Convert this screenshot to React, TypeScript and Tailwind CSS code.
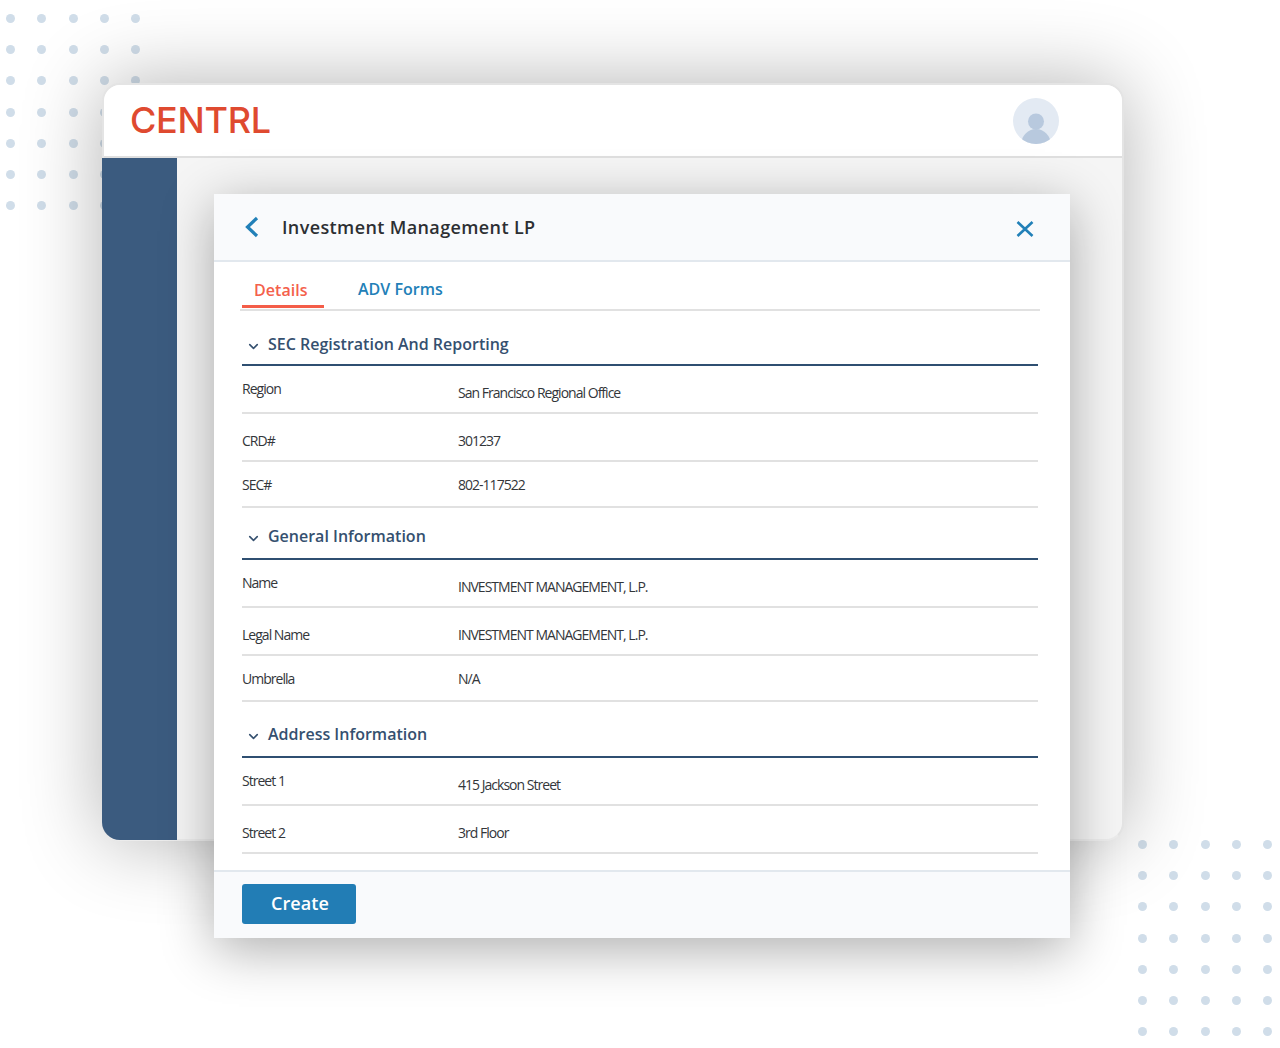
import React from "react";
import { ChevronDown } from "lucide-react";

const dotIndexes = Array.from({ length: 35 }, (_, i) => i);

const DotGrid = ({ className }: { className: string }) => (
  <div className={`absolute grid grid-cols-[repeat(5,9px)] gap-x-[22.25px] gap-y-[22.2px] ${className}`}>
    {dotIndexes.map((i) => (
      <div key={i} className="h-[9px] w-[9px] rounded-full bg-[#d0dde9]" />
    ))}
  </div>
);

interface RowProps {
  label: string;
  value: string;
  height: string;
  labelPad: string;
  valuePad: string;
}

const Row = ({ label, value, height, labelPad, valuePad }: RowProps) => (
  <div className={`mx-[2px] flex items-start border-b-2 border-[#e1e1e1] text-sm leading-5 tracking-[-0.98px] text-[#33363a] ${height}`}>
    <div className={`w-[216px] ${labelPad}`}>{label}</div>
    <div className={valuePad}>{value}</div>
  </div>
);

const SectionHeading = ({ title, className }: { title: string; className: string }) => (
  <div className={`mx-[2px] flex items-end border-b-2 border-[#2f4f71] text-[#35506f] ${className}`}>
    <ChevronDown size={15} strokeWidth={2.5} className="ml-[4px] mb-[2px] mr-[7px]" />
    <span className="text-base font-semibold leading-6">{title}</span>
  </div>
);

const App = () => {
  return (
    <div className="relative h-[1048px] w-[1280px] overflow-hidden bg-white font-['Open_Sans',sans-serif]">
      <DotGrid className="left-[6px] top-[14px]" />
      <DotGrid className="left-[1138px] top-[840px]" />

      <div className="relative ml-[102px] mt-[83px] h-[758px] w-[1022px] rounded-[18px] border-2 border-[#e4e4e4] border-b-[#ececec] bg-[#f5f5f5] shadow-[0_0_80px_rgba(0,0,0,0.3)]">
        {/* top bar */}
        <div className="flex h-[73px] items-center justify-between rounded-t-[16px] border-b-2 border-[#dfdfdf] bg-white pl-[26px] pr-[63px]">
          <span className="pb-[2px] font-['Inter',sans-serif] text-[36px] font-[450] leading-none tracking-[-0.3px] text-[#df4a30]">CENTRL</span>
          <svg width="46" height="46" viewBox="0 0 46 46">
            <defs>
              <clipPath id="avatarClip">
                <circle cx="23" cy="23" r="23" />
              </clipPath>
            </defs>
            <circle cx="23" cy="23" r="23" fill="#e3eaf3" />
            <g clipPath="url(#avatarClip)" fill="#b8c9de">
              <circle cx="23" cy="23.5" r="8" />
              <ellipse cx="23" cy="47" rx="15" ry="16" />
            </g>
          </svg>
        </div>

        <div className="flex h-[682px]">
          <div className="-ml-[2px] w-[75px] rounded-bl-[18px] bg-[#3b5b7f]" />

          {/* dialog */}
          <div className="ml-[37px] mt-[36px] h-[744px] w-[856px] bg-white shadow-[0_12px_50px_rgba(0,0,0,0.32)]">
            <div className="flex h-[68px] items-center justify-between border-b-2 border-[#e2e8ee] bg-[#f9fafc] pl-[30px] pr-[36px]">
              <div className="flex items-center">
                <svg width="15" height="22" viewBox="0 0 15 22" fill="none" stroke="#2280b8" strokeWidth="3.2">
                  <path d="M13 2 L3.5 11 L13 20" />
                </svg>
                <span className="ml-[23px] text-lg font-semibold leading-6 tracking-[0.38px] text-[#2d2f33]">Investment Management LP</span>
              </div>
              <svg width="18" height="16" viewBox="0 0 18 16" fill="none" stroke="#2280b8" strokeWidth="2.6" className="mt-[3px]">
                <path d="M1.5 1 L16.5 15 M16.5 1 L1.5 15" />
              </svg>
            </div>

            <div className="px-[26px]">
              <div className="flex h-[49px] w-[800px] items-end border-b-2 border-[#e1e1e1] pl-[2px]">
                <div className="mb-[1px] h-[30px] w-[82px] border-b-[3px] border-[#f45d48] pl-[12px] text-base font-semibold leading-6 tracking-[0.05px] text-[#f4604b]">
                  Details
                </div>
                <div className="mb-[8px] ml-[34px] text-base font-semibold leading-6 tracking-[0px] text-[#2280b8]">ADV Forms</div>
              </div>

              <div className="w-[800px]">
                <SectionHeading title="SEC Registration And Reporting" className="h-[55px] pb-[8px]" />
                <Row label="Region" value="San Francisco Regional Office" height="h-[48px]" labelPad="pt-[13px]" valuePad="pt-[17px]" />
                <Row label="CRD#" value="301237" height="h-[48px]" labelPad="pt-[17px]" valuePad="pt-[17px]" />
                <Row label="SEC#" value="802-117522" height="h-[46px]" labelPad="pt-[13px]" valuePad="pt-[13px]" />

                <SectionHeading title="General Information" className="h-[52px] pb-[10px]" />
                <Row label="Name" value="INVESTMENT MANAGEMENT, L.P." height="h-[48px]" labelPad="pt-[13px]" valuePad="pt-[17px]" />
                <Row label="Legal Name" value="INVESTMENT MANAGEMENT, L.P." height="h-[48px]" labelPad="pt-[17px]" valuePad="pt-[17px]" />
                <Row label="Umbrella" value="N/A" height="h-[46px]" labelPad="pt-[13px]" valuePad="pt-[13px]" />

                <SectionHeading title="Address Information" className="h-[56px] pb-[10px]" />
                <Row label="Street 1" value="415 Jackson Street" height="h-[48px]" labelPad="pt-[13px]" valuePad="pt-[17px]" />
                <Row label="Street 2" value="3rd Floor" height="h-[48px]" labelPad="pt-[17px]" valuePad="pt-[17px]" />
              </div>
            </div>

            <div className="mt-[16px] flex h-[68px] items-start border-t-2 border-[#e2e8ee] bg-[#f9fafc] pl-[28px] pt-[12px]">
              <button className="h-[40px] w-[114px] rounded-[3px] bg-[#227db5] pb-[2px] pl-[2px] text-lg font-semibold leading-6 tracking-[0.1px] text-white">
                Create
              </button>
            </div>
          </div>
        </div>
      </div>
    </div>
  );
};

export default App;
